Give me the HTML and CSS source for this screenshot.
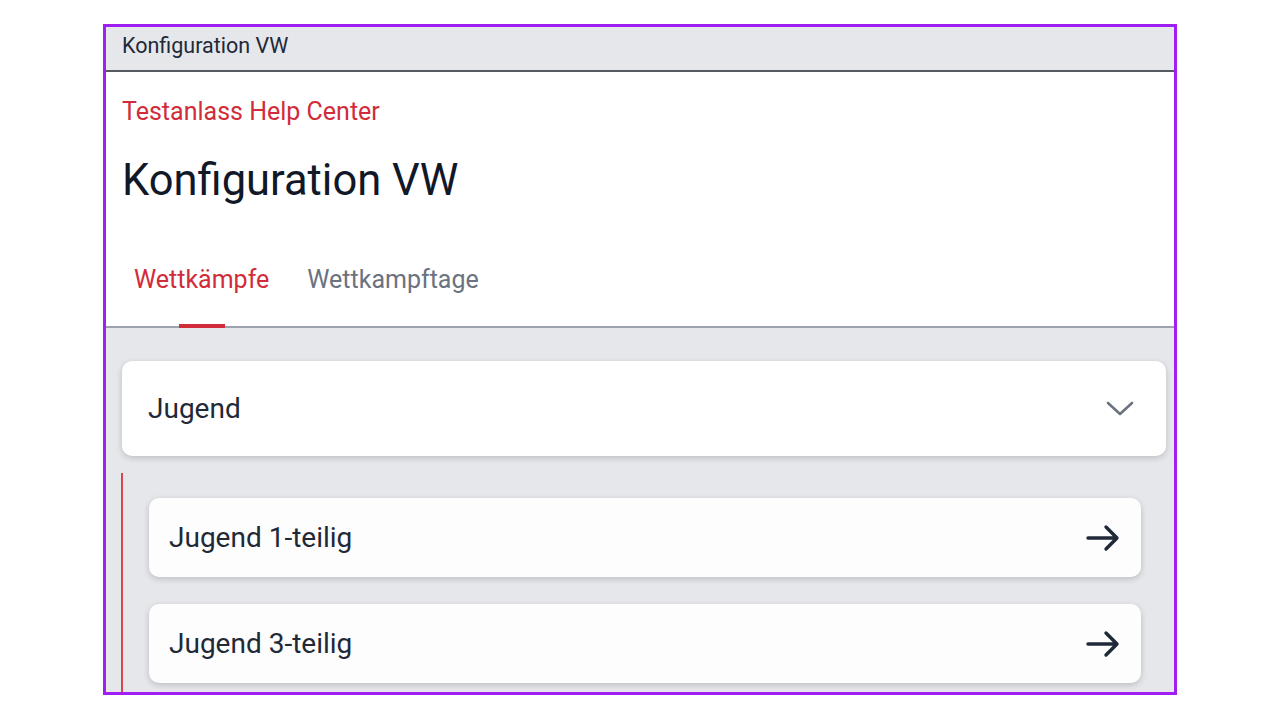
FILE: index.html
```html
<!DOCTYPE html>
<html lang="de">
<head>
    <meta charset="UTF-8">
    <meta name="viewport" content="width=device-width, initial-scale=1.0">
    <title>Konfiguration VW</title>
    <link rel="stylesheet" href="styles.css">
</head>
<body>
    <div class="frame">
        <div class="topbar">Konfiguration VW</div>
        <div class="header">
            <div class="breadcrumb">Testanlass Help Center</div>
            <h1 class="title">Konfiguration VW</h1>
            <div class="tabs">
                <a href="#" class="tab active">Wettkämpfe</a>
                <a href="#" class="tab">Wettkampftage</a>
            </div>
        </div>
        <div class="content">
            <div class="group">
                <span>Jugend</span>
                <svg class="chevron" width="28" height="16" viewBox="0 0 28 16">
                    <path d="M2 2 L14 13 L26 2" fill="none" stroke="currentColor" stroke-width="2.6" stroke-linecap="round" stroke-linejoin="round"/>
                </svg>
            </div>
            <div class="sublist">
                <a href="#" class="item">
                    <span>Jugend 1-teilig</span>
                    <svg class="arrow" width="36" height="28" viewBox="0 0 36 28">
                        <path d="M3 14 H32 M21 3 L32 14 L21 25" fill="none" stroke="currentColor" stroke-width="3.4" stroke-linecap="round" stroke-linejoin="round"/>
                    </svg>
                </a>
                <a href="#" class="item">
                    <span>Jugend 3-teilig</span>
                    <svg class="arrow" width="36" height="28" viewBox="0 0 36 28">
                        <path d="M3 14 H32 M21 3 L32 14 L21 25" fill="none" stroke="currentColor" stroke-width="3.4" stroke-linecap="round" stroke-linejoin="round"/>
                    </svg>
                </a>
            </div>
        </div>
    </div>
</body>
</html>
```

FILE: styles.css
```css
body {
    margin: 0;
    background-color: #fff;
    font-family: Roboto, "Liberation Sans", Arial, sans-serif;
}
.frame {
    box-sizing: border-box;
    width: 1074px;
    height: 671px;
    margin: 24px 0 0 103px;
    border: 3px solid #a11ef2;
    overflow: hidden;
    display: flex;
    flex-direction: column;
}
.topbar {
    height: 45px;
    flex: none;
    box-sizing: border-box;
    padding: 0 16px 7px;
    display: flex;
    align-items: center;
    font-size: 21.5px;
    color: #1f2937;
    background-color: #e5e7eb;
    border-bottom: 2px solid #555a60;
}
.header {
    flex: none;
    height: 256px;
    box-sizing: border-box;
    padding: 25px 16px 0;
    background-color: #fff;
    border-bottom: 2px solid #9ca3af;
    display: flex;
    flex-direction: column;
}
.breadcrumb {
    font-size: 25px;
    color: #d12c3a;
}
.title {
    margin: 29px 0 0;
    font-size: 43.5px;
    font-weight: 400;
    color: #111827;
}
.tabs {
    margin-top: auto;
    display: flex;
    gap: 14px;
}
.tab {
    position: relative;
    padding: 0 12px 32px;
    font-size: 25px;
    color: #6b7280;
    text-decoration: none;
}
.tab.active {
    color: #d12c3a;
}
.tab.active::after {
    content: "";
    position: absolute;
    left: 50%;
    width: 46px;
    margin-left: -23px;
    bottom: -2px;
    height: 4px;
    background-color: #d12c3a;
}
.content {
    flex: 1;
    padding: 33px 8px 0 16px;
    background-color: #e5e7eb;
}
.group {
    height: 95px;
    box-sizing: border-box;
    padding: 0 32px 0 26px;
    display: flex;
    align-items: center;
    justify-content: space-between;
    font-size: 28px;
    color: #1f2937;
    background-color: #fff;
    border-radius: 10px;
    box-shadow: 0 2px 6px rgba(0, 0, 0, 0.18);
}
.chevron {
    color: #6b7280;
}
/* nested items hang off a red rail */
.sublist {
    margin: 17px 25px 0 -1px;
    padding: 25px 0 24px 26px;
    border-left: 2px solid #d9444f;
    display: flex;
    flex-direction: column;
    gap: 27px;
}
.item {
    height: 79px;
    box-sizing: border-box;
    padding: 0 20px;
    display: flex;
    align-items: center;
    justify-content: space-between;
    font-size: 28px;
    color: #1f2937;
    text-decoration: none;
    background-color: #fdfdfd;
    border-radius: 10px;
    box-shadow: 0 2px 6px rgba(0, 0, 0, 0.18);
}
.arrow {
    color: #1f2937;
}
```
